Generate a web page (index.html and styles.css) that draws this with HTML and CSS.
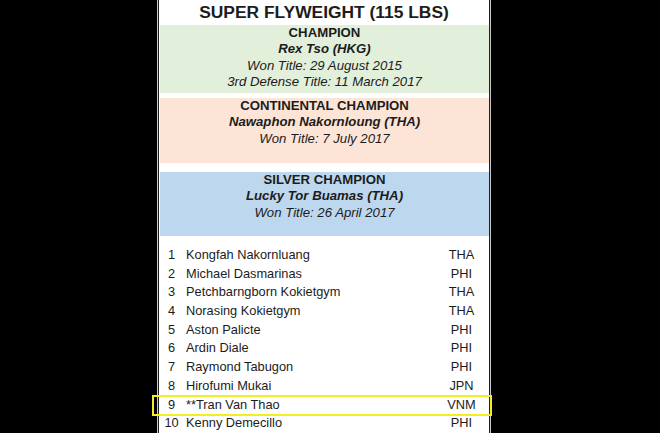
FILE: index.html
```html
<!DOCTYPE html>
<html>
<head>
<meta charset="utf-8">
<link rel="stylesheet" href="styles.css">
</head>
<body>
<div class="sheet">
  <div class="inner">
    <h1 class="title">SUPER FLYWEIGHT (115 LBS)</h1>
    <section class="band band-green">
      <div class="band-head">CHAMPION</div>
      <div class="band-name">Rex Tso (HKG)</div>
      <div class="band-note">Won Title: 29 August 2015</div>
      <div class="band-note">3rd Defense Title: 11 March 2017</div>
    </section>
    <section class="band band-peach">
      <div class="band-head">CONTINENTAL CHAMPION</div>
      <div class="band-name">Nawaphon Nakornloung (THA)</div>
      <div class="band-note">Won Title: 7 July 2017</div>
    </section>
    <section class="band band-blue">
      <div class="band-head">SILVER CHAMPION</div>
      <div class="band-name">Lucky Tor Buamas (THA)</div>
      <div class="band-note">Won Title: 26 April 2017</div>
    </section>
    <ol class="ranks">
      <li class="rank"><span class="num">1</span><span class="name">Kongfah Nakornluang</span><span class="nat">THA</span></li>
      <li class="rank"><span class="num">2</span><span class="name">Michael Dasmarinas</span><span class="nat">PHI</span></li>
      <li class="rank"><span class="num">3</span><span class="name">Petchbarngborn Kokietgym</span><span class="nat">THA</span></li>
      <li class="rank"><span class="num">4</span><span class="name">Norasing Kokietgym</span><span class="nat">THA</span></li>
      <li class="rank"><span class="num">5</span><span class="name">Aston Palicte</span><span class="nat">PHI</span></li>
      <li class="rank"><span class="num">6</span><span class="name">Ardin Diale</span><span class="nat">PHI</span></li>
      <li class="rank"><span class="num">7</span><span class="name">Raymond Tabugon</span><span class="nat">PHI</span></li>
      <li class="rank"><span class="num">8</span><span class="name">Hirofumi Mukai</span><span class="nat">JPN</span></li>
      <li class="rank rank-marked"><span class="num">9</span><span class="name">**Tran Van Thao</span><span class="nat">VNM</span></li>
      <li class="rank"><span class="num">10</span><span class="name">Kenny Demecillo</span><span class="nat">PHI</span></li>
    </ol>
  </div>
</div>
</body>
</html>
```

FILE: styles.css
```css
html, body {
  margin: 0;
  padding: 0;
  background: #000;
  height: 433px;
  overflow: hidden;
}

body {
  font-family: "Liberation Sans", Arial, sans-serif;
  color: #1c1c1c;
}

.sheet {
  margin-left: 157px;
  width: 332px;
  height: 433px;
  border-left: 1px solid #c8c8c8;
  border-right: 1px solid #c8c8c8;
}

.inner {
  height: 100%;
  background: #fff;
  border-left: 1px solid #202020;
  border-right: 1px solid #202020;
}

.title {
  margin: 0;
  height: 25px;
  line-height: 25px;
  font-size: 17.4px;
  font-weight: bold;
  text-align: center;
}

.band {
  margin-left: 1px;
  text-align: center;
  font-size: 13.2px;
  line-height: 16.3px;
}

.band-green {
  background: #e2efda;
  height: 68px;
}

.band-peach {
  background: #fce4d6;
  margin-top: 5px;
  height: 65px;
}

.band-blue {
  background: #bdd7ee;
  margin-top: 9px;
  height: 64px;
}

.band-head {
  font-weight: bold;
}

.band-name {
  font-weight: bold;
  font-style: italic;
}

.band-note {
  font-style: italic;
}

.ranks {
  list-style: none;
  margin: 10px 0 0;
  padding: 0;
  font-size: 12.8px;
}

.rank {
  position: relative;
  display: grid;
  grid-template-columns: 25px 1fr 55px;
  height: 18.7px;
  line-height: 18.7px;
}

.num {
  text-align: center;
}

.name {
  padding-left: 2px;
}

.nat {
  text-align: center;
}

.rank-marked::after {
  content: "";
  position: absolute;
  left: -7px;
  right: -3px;
  top: -1px;
  bottom: -2px;
  border: 2px solid #f2ee22;
}
```
